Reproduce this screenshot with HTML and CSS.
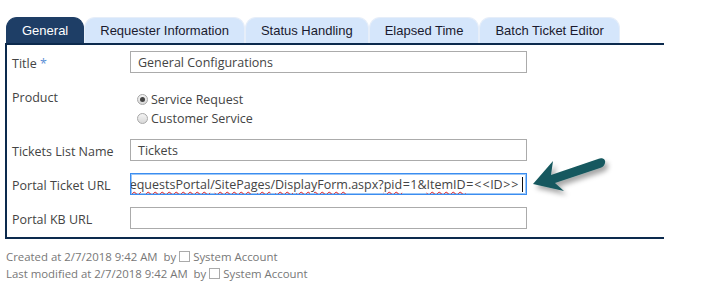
FILE: index.html
```html
<!DOCTYPE html>
<html lang="en">
<head>
    <meta charset="UTF-8">
    <title>Ticket Settings</title>
    <link rel="stylesheet" href="styles.css">
</head>
<body>
    <div class="tabs">
        <div class="tab active">General</div>
        <div class="tab">Requester Information</div>
        <div class="tab">Status Handling</div>
        <div class="tab">Elapsed Time</div>
        <div class="tab">Batch Ticket Editor</div>
    </div>
    <div class="panel">
        <div class="form">
            <div class="label">Title <span class="req">*</span></div>
            <div class="field"><div class="input">General Configurations</div></div>

            <div class="label">Product</div>
            <div class="field radios">
                <label class="radio"><span class="dot checked"></span>Service Request</label>
                <label class="radio"><span class="dot"></span>Customer Service</label>
            </div>

            <div class="label">Tickets List Name</div>
            <div class="field"><div class="input">Tickets</div></div>

            <div class="label">Portal Ticket URL</div>
            <div class="field"><div class="input focus"><span class="scroll"><span class="typo">RequestsPortal</span>/<span class="typo">SitePages</span>/<span class="typo">DisplayForm</span>.aspx?<span class="typo">pid</span><span class="op">=</span>1&amp;<span class="typo">ItemID</span><span class="op">=</span><span class="op">&lt;</span><span class="op">&lt;</span>ID<span class="op">&gt;</span><span class="op">&gt;</span><span class="caret"></span></span></div></div>

            <div class="label">Portal KB URL</div>
            <div class="field"><div class="input"></div></div>
        </div>
        <svg class="arrow" width="100" height="60" viewBox="0 0 100 60">
            <defs>
                <filter id="shadow" x="-20%" y="-30%" width="150%" height="170%">
                    <feDropShadow dx="3" dy="4" stdDeviation="2.5" flood-color="#000" flood-opacity="0.35"/>
                </filter>
            </defs>
            <path d="M13 38 L33 15 L31 29 L78 13 C83 11 86 14 85 17 C84 20 83 21 80 22 L35 37 L44 45 Z" fill="#15595e" filter="url(#shadow)"/>
        </svg>
    </div>
    <div class="meta">
        <div>Created at 2/7/2018 9:42 AM&nbsp; by <span class="box"></span> System Account</div>
        <div>Last modified at 2/7/2018 9:42 AM&nbsp; by <span class="box"></span> System Account</div>
    </div>
</body>
</html>
```

FILE: styles.css
```css
body {
    margin: 0;
    padding: 17px 0 0 0;
    font-family: "Open Sans", "Segoe UI", sans-serif;
    font-size: 12.5px;
    color: #444;
    background: white;
}
.tabs {
    display: flex;
    margin-left: 6px;
    height: 26px;
}
.tab {
    font-family: "Liberation Sans", Arial, sans-serif;
    font-size: 13px;
    color: #1a1a2e;
    background: #d5e6fb;
    border: 1px solid #e6eef9;
    border-bottom: none;
    border-radius: 11px 11px 0 0;
    padding: 5px 15px 0 15px;
    box-sizing: border-box;
    height: 26px;
}
.tab.active {
    background: #1e3e66;
    border-color: #1e3e66;
    color: white;
}
.panel {
    position: relative;
    width: 659px;
    margin-left: 5px;
    border-top: 2px solid #0c2a4d;
    border-left: 2px solid #0c2a4d;
    border-bottom: 2px solid #0c2a4d;
    padding: 6px 0 6px 5px;
    box-sizing: border-box;
    height: 196px;
}
.form {
    display: grid;
    grid-template-columns: 118px 397px;
    row-gap: 12px;
}
.label {
    padding-top: 4px;
}
.req {
    color: #5b8fd6;
}
.input {
    height: 22px;
    box-sizing: border-box;
    border: 1px solid #ababab;
    padding: 2px 7px 0 7px;
    color: #444;
    white-space: nowrap;
    overflow: hidden;
    display: flex;
}
.input.focus {
    border-color: #3b8df0;
    box-shadow: 0 0 0 1px #9cc7f7 inset;
    justify-content: flex-end;
    padding-right: 3px;
}
.scroll {
    flex-shrink: 0;
}
.typo {
    text-decoration-line: underline;
    text-decoration-style: wavy;
    text-decoration-color: #e02020;
    text-decoration-thickness: 1px;
    text-underline-offset: 2px;
}
.op {
    padding: 0 0.5px;
}
.caret {
    display: inline-block;
    width: 1px;
    height: 15px;
    background: #111;
    margin-left: 3px;
    vertical-align: -3px;
}
.radios {
    padding: 6px 0 0 7px;
    display: flex;
    flex-direction: column;
    gap: 2px;
}
.radio {
    display: flex;
    align-items: center;
    gap: 3px;
}
.dot {
    width: 11px;
    height: 11px;
    border-radius: 50%;
    border: 1px solid #a8a8a8;
    background: linear-gradient(#f4f4f4, #d8d8d8);
    box-sizing: border-box;
    position: relative;
}
.dot.checked::after {
    content: "";
    position: absolute;
    left: 2px;
    top: 2px;
    width: 5px;
    height: 5px;
    border-radius: 50%;
    background: #444;
}
.arrow {
    position: absolute;
    left: 513px;
    top: 101px;
}
.meta {
    margin: 9px 0 0 6px;
    font-size: 11.4px;
    color: #777;
    line-height: 17px;
}
.box {
    display: inline-block;
    width: 9px;
    height: 9px;
    border: 1px solid #aaa;
    vertical-align: -1px;
}
```
